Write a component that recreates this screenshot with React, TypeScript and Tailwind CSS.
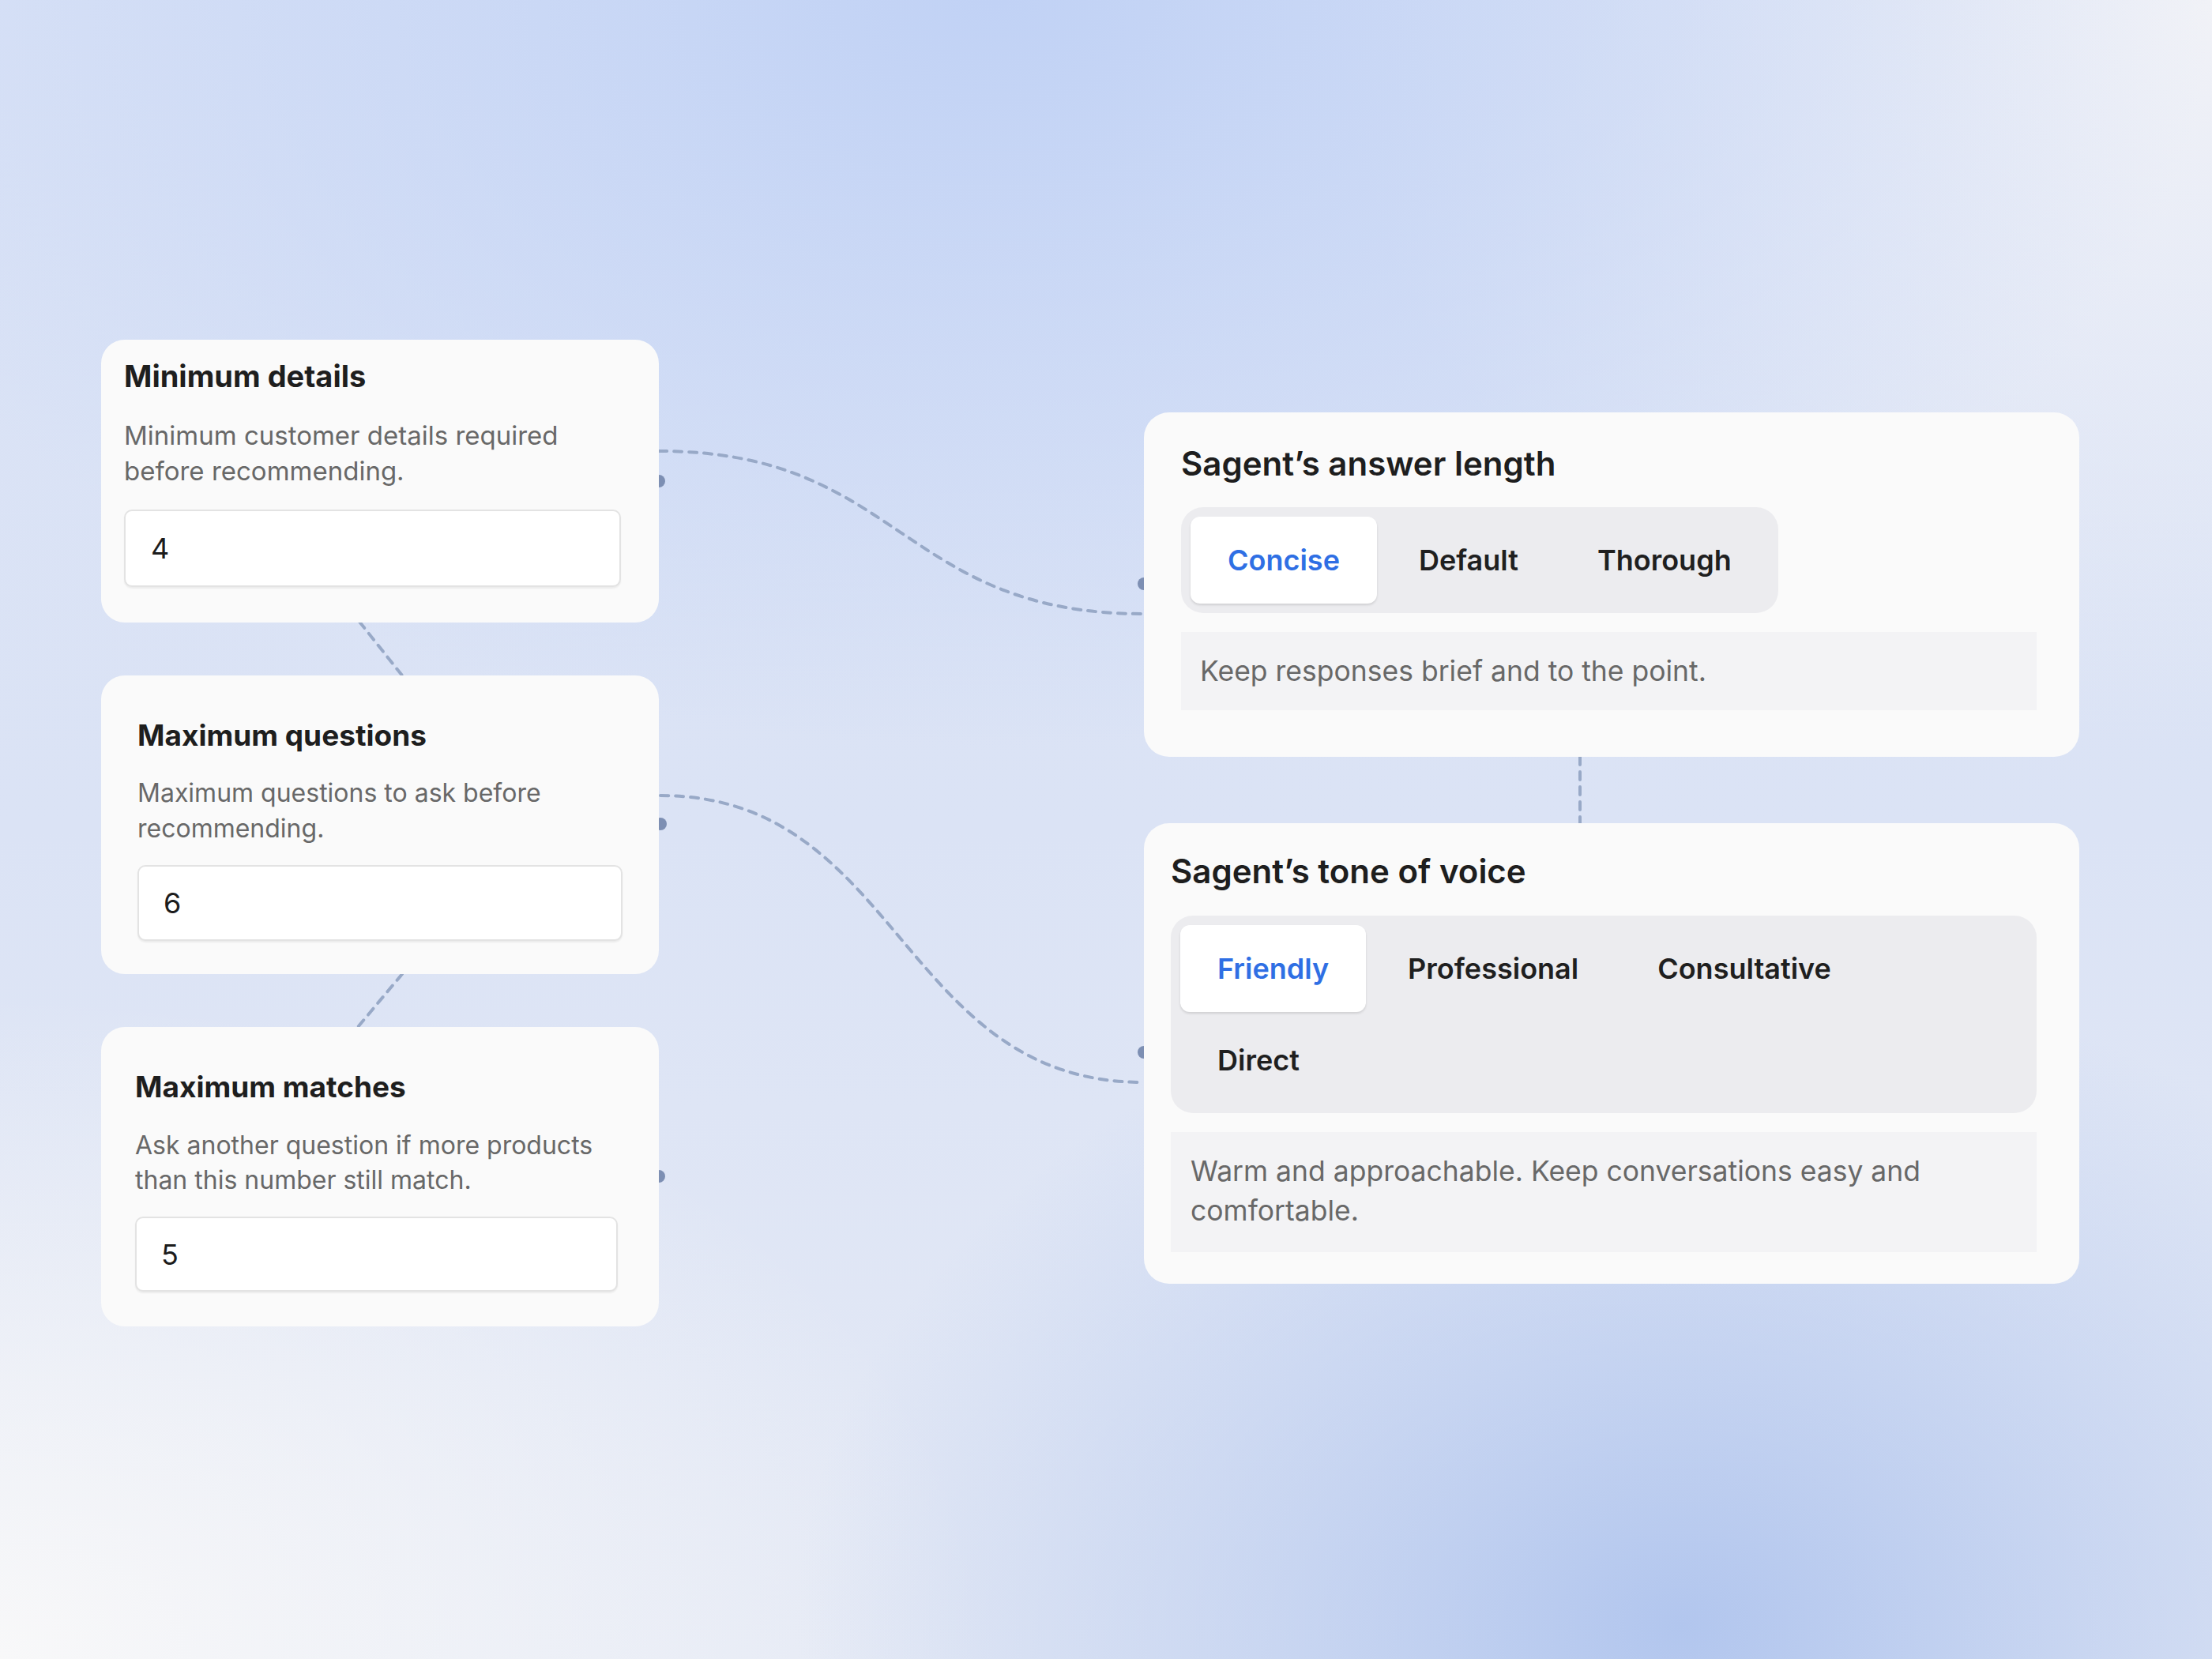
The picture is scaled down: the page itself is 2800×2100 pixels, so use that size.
import React from "react";

type Option = { label: string; active?: boolean };

const lengthOptions: Option[] = [
  { label: "Concise", active: true },
  { label: "Default" },
  { label: "Thorough" },
];

const toneOptions: Option[] = [
  { label: "Friendly", active: true },
  { label: "Professional" },
  { label: "Consultative" },
  { label: "Direct" },
];

function Segment({ option }: { option: Option }) {
  return (
    <div
      className={
        option.active
          ? "flex h-[110px] items-center rounded-[12px] bg-white px-[47px] text-[36px] font-semibold text-[#2f6fe4] shadow-[0_2px_3px_rgba(0,0,0,0.12)]"
          : "flex h-[110px] items-center rounded-[12px] px-[47px] text-[36px] font-semibold text-[#1f1f1f]"
      }
    >
      {option.label}
    </div>
  );
}

function NumberField({ value, className }: { value: string; className: string }) {
  return (
    <div
      className={
        "flex items-center rounded-[10px] border-2 border-[#e3e3e3] bg-white text-[36px] text-[#1c1c1c] shadow-[0_2px_2px_rgba(0,0,0,0.06)] " +
        className
      }
    >
      {value}
    </div>
  );
}

function Connectors() {
  const dash = {
    fill: "none",
    stroke: "#98a9c7",
    strokeWidth: 4,
    strokeDasharray: "10 9",
    strokeLinecap: "round" as const,
  };
  return (
    <svg className="absolute inset-0" width="2800" height="2100" viewBox="0 0 2800 2100">
      <path d="M834 571 C1140 571 1140 777 1447 777" {...dash} />
      <path d="M836 1007 C1140 1007 1140 1370 1447 1370" {...dash} />
      <path d="M455 787 L509 855" {...dash} />
      <path d="M509 1233 L453 1300" {...dash} />
      <path d="M2000 958 L2000 1042" {...dash} />
      <g fill="#7d8fb3">
        <circle cx="834" cy="609" r="8" />
        <circle cx="836" cy="1043" r="8" />
        <circle cx="834" cy="1489" r="8" />
        <circle cx="1448" cy="739" r="8" />
        <circle cx="1448" cy="1332" r="8" />
      </g>
    </svg>
  );
}

export default function App() {
  return (
    <div className="relative h-[2100px] w-[2800px] overflow-hidden bg-[#e2e8f5] bg-[radial-gradient(ellipse_55%_45%_at_45%_0%,#c1d2f5_0%,transparent_100%),radial-gradient(ellipse_40%_40%_at_76%_98%,#b2c6ee_0%,transparent_100%),radial-gradient(ellipse_45%_40%_at_0%_100%,#f8f8f9_0%,transparent_100%),radial-gradient(ellipse_40%_45%_at_100%_0%,#f1f2f7_0%,transparent_100%),linear-gradient(180deg,#d9e2f6_0%,#dbe3f5_50%,#e4e9f5_100%)] font-['Inter',sans-serif]">
      <Connectors />

      <div className="relative flex items-start">
        {/* conversation limits */}
        <div className="ml-[128px] mt-[430px] flex w-[706px] flex-col gap-[67px]">
          <div className="h-[358px] rounded-[30px] bg-[#fafafa] pl-[29px] pt-[25px]">
            <h3 className="text-[38px] font-bold leading-[42px] text-[#1e1e1e]">Minimum details</h3>
            <p className="mt-[32px] w-[600px] text-[33px] leading-[45px] text-[#686868]">
              Minimum customer details required before recommending.
            </p>
            <NumberField value="4" className="mt-[26px] h-[98px] w-[629px] pl-[32px]" />
          </div>

          <div className="h-[378px] rounded-[30px] bg-[#fafafa] pl-[46px] pt-[55px]">
            <h3 className="text-[37px] font-bold leading-[42px] text-[#1e1e1e]">Maximum questions</h3>
            <p className="mt-[29px] w-[600px] text-[32px] leading-[45px] text-[#686868]">
              Maximum questions to ask before recommending.
            </p>
            <NumberField value="6" className="mt-[24px] h-[96px] w-[614px] pl-[31px]" />
          </div>

          <div className="h-[379px] rounded-[30px] bg-[#fafafa] pl-[43px] pt-[55px]">
            <h3 className="text-[37px] font-bold leading-[42px] text-[#1e1e1e]">Maximum matches</h3>
            <p className="mt-[31px] w-[600px] text-[32px] leading-[44px] text-[#686868]">
              Ask another question if more products than this number still match.
            </p>
            <NumberField value="5" className="mt-[24px] h-[95px] w-[611px] pl-[31px]" />
          </div>
        </div>

        {/* assistant style */}
        <div className="ml-[614px] mt-[522px] flex w-[1184px] flex-col gap-[84px]">
          <div className="h-[436px] rounded-[32px] bg-[#fafafa] pl-[47px] pr-[54px] pt-[41px]">
            <h3 className="text-[42px] font-semibold leading-[48px] text-[#1e1e1e]">Sagent’s answer length</h3>
            <div className="mt-[31px] flex w-fit gap-[6px] rounded-[28px] bg-[#ececef] p-[12px]">
              {lengthOptions.map((o) => (
                <Segment key={o.label} option={o} />
              ))}
            </div>
            <div className="mt-[24px] bg-[#f3f3f5] px-[24px] pb-[25px] pt-[26px] text-[35.5px] leading-[48px] text-[#686868]">
              Keep responses brief and to the point.
            </div>
          </div>

          <div className="h-[583px] rounded-[32px] bg-[#fafafa] pl-[34px] pr-[54px] pt-[37px]">
            <h3 className="text-[42px] font-semibold leading-[48px] text-[#1e1e1e]">Sagent’s tone of voice</h3>
            <div className="mt-[32px] flex flex-wrap gap-[6px] rounded-[28px] bg-[#ececef] p-[12px] pr-[190px]">
              {toneOptions.map((o) => (
                <Segment key={o.label} option={o} />
              ))}
            </div>
            <div className="mt-[24px] bg-[#f3f3f5] px-[25px] pb-[27px] pt-[25px] text-[35.5px] leading-[50px] text-[#686868]">
              Warm and approachable. Keep conversations easy and comfortable.
            </div>
          </div>
        </div>
      </div>
    </div>
  );
}
